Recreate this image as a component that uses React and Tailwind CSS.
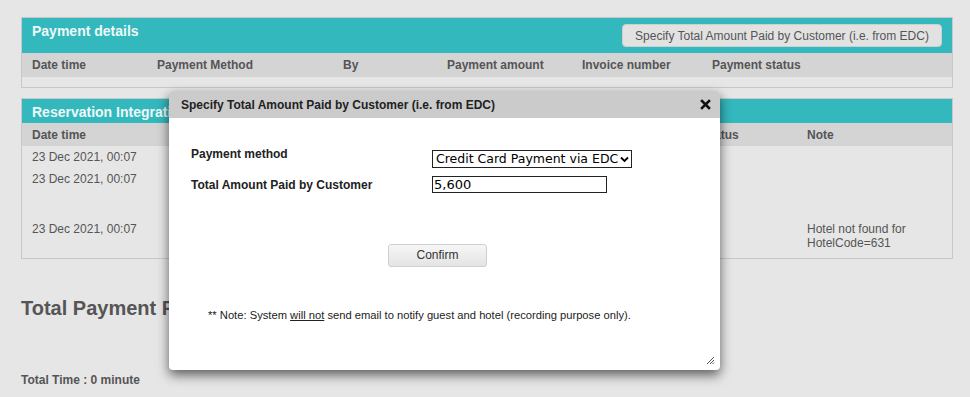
import React from "react";

const paymentCols = [
  { label: "Date time", w: "w-[125px]" },
  { label: "Payment Method", w: "w-[186px]" },
  { label: "By", w: "w-[104px]" },
  { label: "Payment amount", w: "w-[135px]" },
  { label: "Invoice number", w: "w-[130px]" },
  { label: "Payment status", w: "flex-1" },
];

const logRows = [
  { time: "23 Dec 2021, 00:07", h: "h-[22px]", note: "" },
  { time: "23 Dec 2021, 00:07", h: "h-[50px]", note: "" },
  { time: "23 Dec 2021, 00:07", h: "h-[36px]", note: "Hotel not found for\nHotelCode=631" },
];

function CloseIcon() {
  return (
    <svg width="11" height="11" viewBox="0 0 11 11">
      <path d="M2 2 L9 9 M9 2 L2 9" stroke="#111" strokeWidth="2.6" strokeLinecap="square" />
    </svg>
  );
}

function Grip() {
  return (
    <svg width="9" height="9" viewBox="0 0 9 9" className="absolute right-[5px] bottom-[5px]">
      <path d="M1 8 L8 1 M4 8 L8 4 M6.5 8 L8 6.5" stroke="#555" strokeWidth="1" />
    </svg>
  );
}

export default function App() {
  return (
    <div className="relative w-[970px] h-[397px] overflow-hidden bg-[#e6e6e6] font-['Liberation_Sans',Arial,sans-serif] text-[#555]">
      <div className="pl-[21px] pt-[17px]">
        {/* Payment details */}
        <div className="w-[932px] border border-[#c8c8c8]">
          <div className="h-[35px] bg-[#33b8bd] flex justify-between items-start pl-[10px] pr-[10px]">
            <div className="pt-[3px] text-[14px] font-bold text-[#eef8f8]">Payment details</div>
            <button className="mt-[6px] w-[320px] h-[23px] rounded-[4px] bg-[#e2e2e2] border border-[#cfcfcf] text-[12px] text-[#555]">
              Specify Total Amount Paid by Customer (i.e. from EDC)
            </button>
          </div>
          <div className="h-[24px] bg-[#d4d4d4] flex items-center pl-[10px] text-[12px] font-bold">
            {paymentCols.map((c) => (
              <div key={c.label} className={c.w}>{c.label}</div>
            ))}
          </div>
          <div className="h-[10px]"></div>
        </div>

        {/* Reservation Integration log */}
        <div className="w-[932px] mt-[10px] border border-[#c8c8c8]">
          <div className="h-[24px] bg-[#33b8bd] pl-[10px] pt-[3px] text-[14px] font-bold text-[#eef8f8]">
            Reservation Integration Log
          </div>
          <div className="h-[23px] bg-[#d4d4d4] flex items-center pl-[10px] text-[12px] font-bold">
            <div className="w-[150px]">Date time</div>
            <div className="w-[200px]">Action</div>
            <div className="w-[200px]">Request</div>
            <div className="w-[120px]">Response</div>
            <div className="w-[105px]">Status</div>
            <div className="flex-1">Note</div>
          </div>
          <div className="pb-[4px]">
            {logRows.map((r, i) => (
              <div key={i} className={`flex pl-[10px] pt-[4px] text-[12px] leading-[14px] ${r.h}`}>
                <div className="w-[775px]">{r.time}</div>
                <div className="flex-1 whitespace-pre-line">{r.note}</div>
              </div>
            ))}
          </div>
        </div>

        <div className="mt-[34px] text-[20px] font-bold">Total Payment Received</div>
        <div className="mt-[48px] text-[12px] font-bold">Total Time : 0 minute</div>
      </div>

      {/* Modal */}
      <div className="absolute left-[169px] top-[91px] w-[551px] h-[279px] bg-white rounded-[4px] shadow-[0_5px_12px_rgba(0,0,0,0.6)] overflow-hidden">
        <div className="h-[27px] bg-[#cbcbcb] flex items-center justify-between pl-[12px] pr-[9px]">
          <div className="text-[12px] font-bold text-[#222]">Specify Total Amount Paid by Customer (i.e. from EDC)</div>
          <CloseIcon />
        </div>
        <div className="pl-[22px] pt-[32px] text-[12px] font-bold text-[#222]">
          <div className="flex items-center h-[18px]">
            <div className="w-[241px] -mt-[10px]">Payment method</div>
            <div className="w-[200px] h-[18px] border border-[#222] flex items-center justify-between pl-[3px] pr-[2px] font-['DejaVu_Sans',Verdana,sans-serif] font-normal text-[12.5px] text-black">
              <span>Credit Card Payment via EDC</span>
              <svg width="9" height="7" viewBox="0 0 9 7" className="shrink-0">
                <path d="M1 1.5 L4.5 5 L8 1.5" stroke="#000" strokeWidth="1.8" fill="none" />
              </svg>
            </div>
          </div>
          <div className="flex items-center h-[17px] mt-[8px]">
            <div className="w-[241px]">Total Amount Paid by Customer</div>
            <div className="w-[175px] h-[17px] border border-[#222] flex items-center pl-[1px] font-['DejaVu_Sans',Verdana,sans-serif] font-normal text-[13px] text-black">
              5,600
            </div>
          </div>
        </div>
        <div className="pl-[219px] mt-[49px]">
          <button className="w-[99px] h-[23px] rounded-[3px] border border-[#cfcfcf] bg-gradient-to-b from-[#f6f6f6] to-[#e4e4e4] text-[12px] text-[#333]">
            Confirm
          </button>
        </div>
        <div className="pl-[39px] mt-[40px] text-[11.2px] text-[#222]">
          ** Note: System <span className="underline">will not</span> send email to notify guest and hotel (recording purpose only).
        </div>
        <Grip />
      </div>
    </div>
  );
}
